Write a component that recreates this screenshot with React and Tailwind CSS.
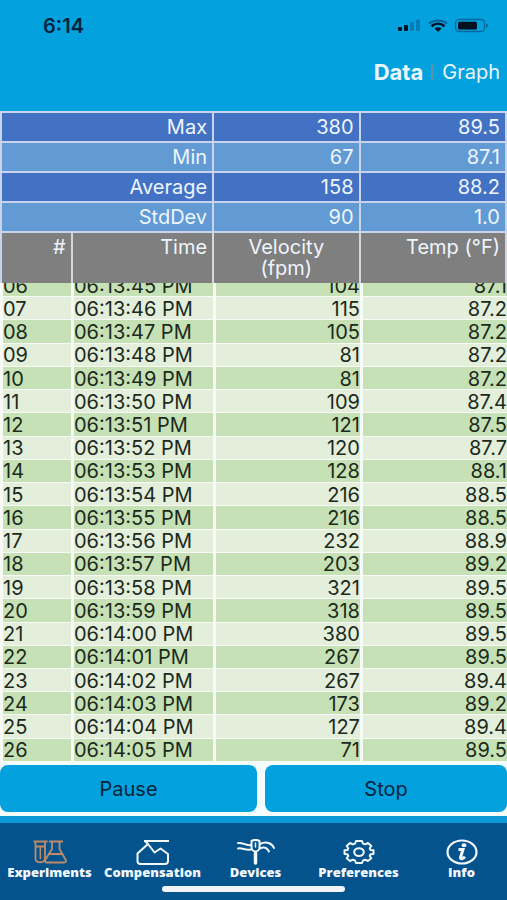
const summary = [
  { label: "Max", velocity: "380", temp: "89.5" },
  { label: "Min", velocity: "67", temp: "87.1" },
  { label: "Average", velocity: "158", temp: "88.2" },
  { label: "StdDev", velocity: "90", temp: "1.0" }
];

const readings = [
  ["06", "06:13:45 PM", "104", "87.1"],
  ["07", "06:13:46 PM", "115", "87.2"],
  ["08", "06:13:47 PM", "105", "87.2"],
  ["09", "06:13:48 PM", "81", "87.2"],
  ["10", "06:13:49 PM", "81", "87.2"],
  ["11", "06:13:50 PM", "109", "87.4"],
  ["12", "06:13:51 PM", "121", "87.5"],
  ["13", "06:13:52 PM", "120", "87.7"],
  ["14", "06:13:53 PM", "128", "88.1"],
  ["15", "06:13:54 PM", "216", "88.5"],
  ["16", "06:13:55 PM", "216", "88.5"],
  ["17", "06:13:56 PM", "232", "88.9"],
  ["18", "06:13:57 PM", "203", "89.2"],
  ["19", "06:13:58 PM", "321", "89.5"],
  ["20", "06:13:59 PM", "318", "89.5"],
  ["21", "06:14:00 PM", "380", "89.5"],
  ["22", "06:14:01 PM", "267", "89.5"],
  ["23", "06:14:02 PM", "267", "89.4"],
  ["24", "06:14:03 PM", "173", "89.2"],
  ["25", "06:14:04 PM", "127", "89.4"],
  ["26", "06:14:05 PM", "71", "89.5"]
];

function StatusBar() {
  return (
    <div className="flex h-13 items-center justify-between pr-[18px] pl-[43px]">
      <span className="text-xl font-semibold text-[#06243c]">6:14</span>
      <svg width="92" height="16" viewBox="0 0 92 16" aria-hidden="true">
        <rect x="1" y="9" width="4" height="4" rx="1" fill="#04121f" />
        <rect x="7" y="7" width="4" height="6" rx="1" fill="#04121f" />
        <rect x="13" y="4" width="4" height="9" rx="1" fill="#047db5" />
        <rect x="19" y="1.500" width="4" height="11.500" rx="1" fill="#047db5" />
        <path d="M32 5.500C37 1.500 45 1.500 50 5.500" fill="none" stroke="#05649a" strokeWidth="2" />
        <path d="M34.500 8.300C38.500 4.800 43.500 4.800 47.500 8.300" fill="none" stroke="#04121f" strokeWidth="2.600" />
        <path d="M37.500 10.500C39.500 8.800 42.500 8.800 44.500 10.500L41 14Z" fill="#04121f" />
        <rect x="58.500" y="1.500" width="29" height="12" rx="3.500" fill="none" stroke="#05689a" strokeWidth="1.300" />
        <rect x="61" y="3.700" width="19" height="7.800" rx="1.500" fill="#04121f" />
        <path d="M89 5.500C91.500 6 91.500 9 89 9.500Z" fill="#05689a" />
      </svg>
    </div>
  );
}

function SummaryTable() {
  const cell = "h-[30px] border-r-2 border-b-2 border-[#c9d3ec] py-0 pr-[5px] text-right font-normal";
  const head = "h-[50px] border-r-2 border-[#d5d5dc] pt-1 align-top leading-[21px] font-normal";
  return (
    <table className="w-full table-fixed border-separate border-spacing-0 border-t-2 border-l-2 border-[#c9d3ec] text-xl leading-6 text-[#eef5fd]">
      <colgroup>
        <col className="w-[14%]" />
        <col className="w-[28%]" />
        <col className="w-[29%]" />
        <col className="w-[29%]" />
      </colgroup>
      <tbody>
        {summary.map((row, i) => (
          <tr key={row.label} className={i % 2 ? "bg-[#629ad4]" : "bg-[#4371c3]"}>
            <th scope="row" colSpan={2} className={cell}>{row.label}</th>
            <td className={cell}>{row.velocity}</td>
            <td className={cell}>{row.temp}</td>
          </tr>
        ))}
        <tr className="bg-[#7f7f7f]">
          <th scope="col" className={`${head} pr-[5px] text-right`}>#</th>
          <th scope="col" className={`${head} pr-[5px] text-right`}>Time</th>
          <th scope="col" className={`${head} px-5 text-center`}>Velocity (fpm)</th>
          <th scope="col" className={`${head} pr-[5px] text-right`}>Temp (°F)</th>
        </tr>
      </tbody>
    </table>
  );
}

function ReadingsTable() {
  const cell = "border-b border-l-3 border-[#f8fbf5] p-0 pt-px";
  return (
    <div className="flex min-h-0 flex-1 flex-col justify-end overflow-hidden">
      <table
        aria-label="Readings"
        className="h-[calc(100%+9px)] w-full shrink-0 table-fixed border-separate border-spacing-0 text-xl leading-5 text-[#1c2a1b]"
      >
        <colgroup>
          <col className="w-[14%]" />
          <col className="w-[28%]" />
          <col className="w-[29%]" />
          <col className="w-[29%]" />
        </colgroup>
        <tbody>
          {readings.map(([id, time, velocity, temp], i) => (
            <tr key={id} className={i % 2 ? "bg-[#e3eedb]" : "bg-[#c6e1b5]"}>
              <td className={cell}>{id}</td>
              <td className={cell}>{time}</td>
              <td className={`${cell} text-right`}>{velocity}</td>
              <td className={`${cell} text-right`}>{temp}</td>
            </tr>
          ))}
        </tbody>
      </table>
    </div>
  );
}

function ExperimentsIcon() {
  return (
    <svg width="34" height="24" viewBox="0 0 34 24" fill="none" stroke="#c08b69" strokeWidth="1.800">
      <path d="M0.500 1.500H14.500M2.500 1.500V18.500C2.500 23.500 12 23.500 12 18.500V1.500M2.500 6.500H12" />
      <path d="M7.300 7V19" strokeWidth="1.500" />
      <path d="M16 1.500H30M19 1.500V9L12.500 19.500C11.500 21.500 12.500 22.500 14 22.500H31C33 22.500 33.500 21 32.500 19.500L26.500 9V1.500M16.500 14H29" />
    </svg>
  );
}

function CompensationIcon() {
  return (
    <svg width="34" height="26" viewBox="0 0 34 26" fill="none" stroke="#f2f7fc" strokeWidth="2" strokeLinejoin="round">
      <path d="M8 2H33" />
      <path d="M9 2L12 5L1.500 14.500V22C1.500 24 2.500 25 4.500 25H29C31 25 32 24 32 22V15L24.500 9.500L18.500 13.500L12 5" />
    </svg>
  );
}

function DevicesIcon() {
  return (
    <svg width="40" height="26" viewBox="0 0 40 26" fill="none" stroke="#f2f7fc" strokeWidth="2" strokeLinecap="round">
      <path d="M2 4C7 3 9 7 15 6M2 9.500C7 8.500 9 12 15 10.500" />
      <path d="M24 5C30 2 36 4 38 9M24 9.500C28 7.500 31 9 33 12.500" />
      <path d="M15.500 2V8C15.500 14 23.500 14 23.500 8V2C21 0.700 18 0.700 15.500 2Z" />
      <path d="M19.500 4V8" strokeWidth="1.500" />
      <path d="M19.500 14V24" strokeWidth="3.500" />
    </svg>
  );
}

function PreferencesIcon() {
  return (
    <svg width="32" height="26" viewBox="0 0 32 26" fill="none" stroke="#f2f7fc" strokeWidth="2" strokeLinejoin="round">
      <path d="M13 2H19L20 4.600L22.200 5.400L25 4L28.300 7L26.700 9.300L27.500 11L30.500 11.200V15L27.500 15.300L26.700 17L28.300 19.300L25 22L22.200 20.700L20 21.500L19 24H13L12 21.500L9.800 20.700L7 22L3.700 19.300L5.300 17L4.500 15.300L1.500 15V11.200L4.500 11L5.300 9.300L3.700 7L7 4L9.800 5.400L12 4.600Z" />
      <ellipse cx="16" cy="13.100" rx="4.800" ry="3.900" />
    </svg>
  );
}

function InfoIcon() {
  return (
    <svg width="32" height="26" viewBox="0 0 32 26" fill="none" stroke="#f2f7fc">
      <ellipse cx="16" cy="13" rx="14.500" ry="11.500" strokeWidth="2.200" />
      <ellipse cx="18" cy="6.300" rx="2.400" ry="2" fill="#f2f7fc" stroke="none" />
      <path d="M12.500 10.500H17L14.500 18.500C14.300 20.300 16.500 20.300 19 17.800" strokeWidth="3" />
    </svg>
  );
}

const tabs = [
  { label: "Experiments", Icon: ExperimentsIcon },
  { label: "Compensation", Icon: CompensationIcon },
  { label: "Devices", Icon: DevicesIcon },
  { label: "Preferences", Icon: PreferencesIcon },
  { label: "Info", Icon: InfoIcon }
];

function TabBar() {
  return (
    <nav className="overflow-hidden border-t-[7px] border-[#0d98d7] bg-[#04538d] pt-[17px] pb-2">
      <div className="-mr-[6px] -ml-[2px] grid grid-cols-5">
        {tabs.map(({ label, Icon }) => (
          <a
            key={label}
            href={`#${label.toLowerCase()}`}
            className="flex flex-col items-center font-['Open_Sans',sans-serif] text-[13px] leading-4 font-extrabold text-[#f2f7fc]"
          >
            <span className="flex h-6 items-center">
              <Icon />
            </span>
            {label}
          </a>
        ))}
      </div>
      <div className="mx-auto mt-[6px] h-[6px] w-[36%] rounded-full bg-[#f0f4fa]" />
    </nav>
  );
}

export default function App() {
  const button = "h-[47px] rounded-lg bg-[#04a1df] text-xl text-[#06243c]";
  return (
    <div className="flex h-screen flex-col bg-[#f4fbfd] font-[Inter,sans-serif]">
      <header className="h-[111px] bg-[#04a1df]">
        <StatusBar />
        <div className="flex h-10 items-center justify-end gap-2 pr-[7px] text-xl text-[#eaf7fd]">
          <button type="button" className="text-[22px] font-bold">Data</button>
          <span className="h-4 w-[3px] bg-[#5b8fa8]" />
          <button type="button">Graph</button>
        </div>
      </header>
      <SummaryTable />
      <ReadingsTable />
      <div className="flex gap-2 pt-[3px] pb-1">
        <button type="button" className={`${button} flex-[17]`}>Pause</button>
        <button type="button" className={`${button} flex-[16]`}>Stop</button>
      </div>
      <TabBar />
    </div>
  );
}
